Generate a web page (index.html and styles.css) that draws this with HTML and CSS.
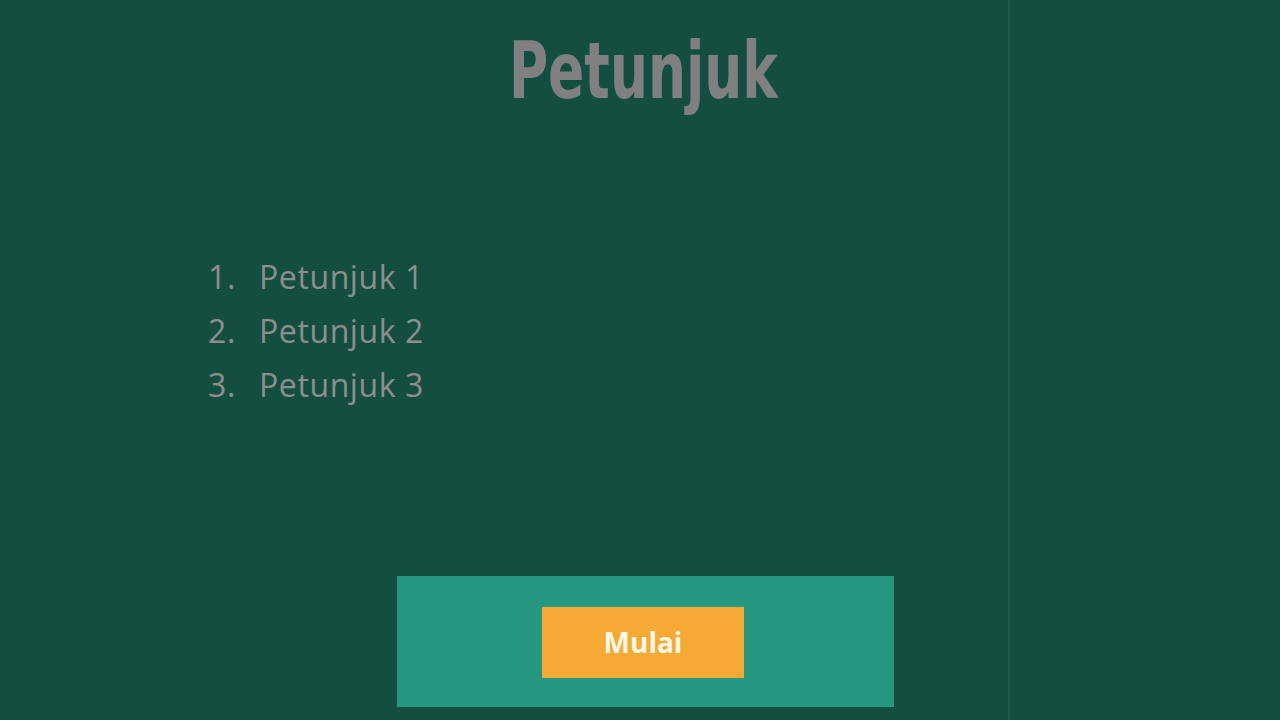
FILE: index.html
```html
<!DOCTYPE html>
<html lang="id">
<head>
<meta charset="utf-8">
<title>Petunjuk</title>
<link rel="stylesheet" href="styles.css">
</head>
<body>
<main class="page">
  <h1 class="title">Petunjuk</h1>
  <ol class="steps">
    <li class="step">Petunjuk 1</li>
    <li class="step">Petunjuk 2</li>
    <li class="step">Petunjuk 3</li>
  </ol>
  <div class="action-panel">
    <button class="start-btn" type="button">Mulai</button>
  </div>
</main>
</body>
</html>
```
FILE: styles.css
```css
html, body {
  margin: 0;
  padding: 0;
}
body {
  width: 1280px;
  height: 720px;
  overflow: hidden;
  background-color: #134e40;
  background-image: linear-gradient(to right, transparent 1008px, rgba(255,255,255,0.07) 1008px, rgba(255,255,255,0.07) 1010px, transparent 1010px);
  font-family: "Open Sans", "Liberation Sans", sans-serif;
}
.page {
  box-sizing: border-box;
  height: 720px;
  padding-left: 10px;
  display: flex;
  flex-direction: column;
  align-items: center;
}
.title {
  margin: 0 0 0 -4px;
  padding-top: 40px;
  font-family: "DejaVu Sans Condensed", "Liberation Sans Narrow", "Liberation Sans", sans-serif;
  font-weight: 700;
  font-size: 66px;
  line-height: 77px;
  color: #808080;
  transform: scale(0.9, 1.2);
  transform-origin: 50% 100%;
}
.steps {
  align-self: flex-start;
  list-style: none;
  margin: 133px 0 0 198px;
  padding: 0;
  counter-reset: step;
}
.step {
  counter-increment: step;
  font-size: 32px;
  line-height: 54px;
  color: #8e8e8e;
  letter-spacing: 0.6px;
}
.step::before {
  content: counter(step) ".";
  display: inline-block;
  width: 51px;
}
.action-panel {
  margin-top: auto;
  margin-bottom: 13px;
  width: 497px;
  height: 131px;
  background: #26987f;
  display: flex;
  align-items: center;
  justify-content: center;
}
.start-btn {
  width: 202px;
  height: 71px;
  border: none;
  background: #f5aa36;
  color: #fff8e6;
  font-family: "Open Sans", "Liberation Sans", sans-serif;
  font-weight: 700;
  font-size: 28px;
  padding: 0;
  margin: 1px 0 0 -4px;
}
```
